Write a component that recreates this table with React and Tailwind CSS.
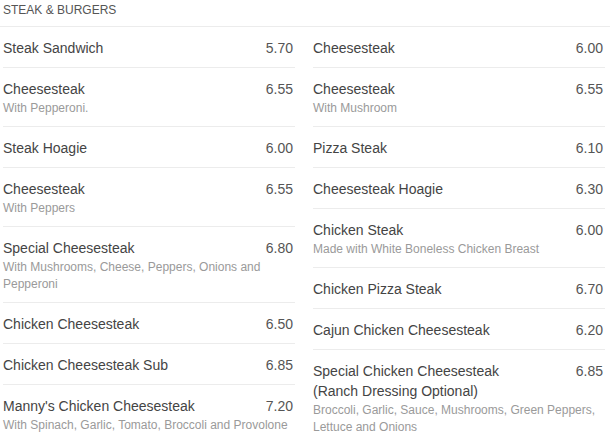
const left = [
  { name: "Steak Sandwich", price: "5.70" },
  { name: "Cheesesteak", price: "6.55", desc: "With Pepperoni." },
  { name: "Steak Hoagie", price: "6.00" },
  { name: "Cheesesteak", price: "6.55", desc: "With Peppers" },
  { name: "Special Cheesesteak", price: "6.80", desc: "With Mushrooms, Cheese, Peppers, Onions and Pepperoni" },
  { name: "Chicken Cheesesteak", price: "6.50" },
  { name: "Chicken Cheesesteak Sub", price: "6.85" },
  { name: "Manny's Chicken Cheesesteak", price: "7.20", desc: "With Spinach, Garlic, Tomato, Broccoli and Provolone" },
]

const right = [
  { name: "Cheesesteak", price: "6.00" },
  { name: "Cheesesteak", price: "6.55", desc: "With Mushroom" },
  { name: "Pizza Steak", price: "6.10" },
  { name: "Cheesesteak Hoagie", price: "6.30" },
  { name: "Chicken Steak", price: "6.00", desc: "Made with White Boneless Chicken Breast" },
  { name: "Chicken Pizza Steak", price: "6.70" },
  { name: "Cajun Chicken Cheesesteak", price: "6.20" },
  { name: "Special Chicken Cheesesteak (Ranch Dressing Optional)", price: "6.85", desc: "Broccoli, Garlic, Sauce, Mushrooms, Green Peppers, Lettuce and Onions" },
]

function Item({ item }) {
  return (
    <div className="border-b border-[#ececec] pt-[11px] pb-[9px]">
      <div className="flex justify-between items-start text-[14px] leading-[20px]">
        <span className="max-w-[215px] text-[#444]">{item.name}</span>
        <span className="text-[#555] pr-[2px]">{item.price}</span>
      </div>
      {item.desc && (
        <p className="mt-[1px] text-[12px] leading-[17px] text-[#9a9a9a]">{item.desc}</p>
      )}
    </div>
  )
}

export default function App() {
  return (
    <div className="w-[610px] h-[437px] overflow-hidden bg-white font-['Liberation_Sans',Arial,sans-serif]">
      {/* encabezado */}
      <div className="border-b border-[#ececec] h-[27px] px-[3px] pt-[2px]">
        <h2 className="text-[12px] leading-[16px] text-[#555] uppercase">Steak &amp; Burgers</h2>
      </div>

      {/* columnas */}
      <div className="grid grid-cols-2 gap-x-[18px] pl-[3px] pr-[5px]">
        <div>
          {left.map((item, i) => (
            <Item key={i} item={item} />
          ))}
        </div>
        <div>
          {right.map((item, i) => (
            <Item key={i} item={item} />
          ))}
        </div>
      </div>
    </div>
  )
}
